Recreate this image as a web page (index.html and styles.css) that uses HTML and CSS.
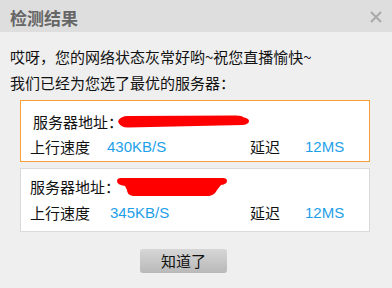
FILE: index.html
```html
<!DOCTYPE html>
<html lang="zh-CN">
<head>
<meta charset="utf-8">
<title>检测结果</title>
<link rel="stylesheet" href="styles.css">
</head>
<body>
<div class="dialog">
  <div class="titlebar">
    <span class="title">检测结果</span>
    <svg class="close" width="12" height="12" viewBox="0 0 12 12"><path d="M1 1L11 11M11 1L1 11" stroke="#a9a9a9" stroke-width="2"/></svg>
  </div>
  <div class="content">
    <p class="msg">哎呀，您的网络状态灰常好哟~祝您直播愉快~</p>
    <p class="msg">我们已经为您选了最优的服务器：</p>
    <div class="card card-selected">
      <div class="row addr addr-indent"><span>服务器地址：</span><svg class="redact" width="131" height="13" viewBox="0 0 131 13"><path d="M0 6.5Q2 1 10 1L118 0.5Q124 0.5 126 2.5Q131 3.5 131 6Q131 9 125 10L10 12.5Q2 12.5 0 6.5Z" fill="#ff0000"/></svg></div>
      <div class="row stats"><span class="label">上行速度</span><span class="val">430KB/S</span><span class="label">延迟</span><span class="val">12MS</span></div>
    </div>
    <div class="card card-plain">
      <div class="row addr"><span>服务器地址：</span><svg class="redact redact-b" width="110" height="18" viewBox="0 0 110 18"><path d="M0 3Q0 0 4 0L106 0Q110 0 110 3Q110 6 104 7L100 12Q98 17 92 18L16 18Q10 17 10 12L8 8Q0 7 0 3Z" fill="#ff0000"/></svg></div>
      <div class="row stats"><span class="label">上行速度</span><span class="val val-b">345KB/S</span><span class="label">延迟</span><span class="val">12MS</span></div>
    </div>
    <div class="actions"><button class="btn">知道了</button></div>
  </div>
</div>
</body>
</html>
```
FILE: styles.css
```css
html, body {
  margin: 0;
  padding: 0;
  background: #efefef;
}
body {
  font-family: "Noto Sans CJK SC", "Liberation Sans", sans-serif;
  color: #111;
  width: 392px;
  height: 288px;
  overflow: hidden;
}
.titlebar {
  height: 32px;
  background: #dedede;
  display: flex;
  align-items: center;
  justify-content: space-between;
  padding: 0 10px 0 10px;
  box-sizing: border-box;
}
.title {
  font-size: 17px;
  font-weight: bold;
  color: #666;
  padding-top: 3px;
}
.close {
  margin-top: 1px;
}
.content {
  padding: 12px 22px 0 10px;
}
.msg {
  margin: 0;
  font-size: 15px;
  line-height: 26px;
}
.card {
  margin: 4px 0 0 10px;
  background: #fff;
  font-size: 15px;
}
.card-selected {
  border: 1px solid #f6a035;
  padding: 8px 0 2px 9px;
}
.card-plain {
  margin-top: 6px;
  border: 1px solid #dadada;
  padding: 5px 0 6px 9px;
}
.row {
  height: 25px;
  display: flex;
  align-items: center;
}
.card-plain .stats {
  margin-top: 1px;
}
.addr-indent {
  padding-left: 3px;
}
.redact {
  display: block;
  margin-left: -5px;
}
.redact-b {
  margin-left: -3px;
}
.stats {
  display: grid;
  grid-template-columns: 77px 143px 55px auto;
  align-items: center;
}
.val {
  font-family: "Liberation Sans", sans-serif;
  color: #1e9fe9;
  font-size: 15px;
}
.val-b {
  padding-left: 3px;
}
.actions {
  display: flex;
  padding: 17px 0 0 130px;
}
.btn {
  width: 87px;
  height: 24px;
  border: none;
  border-radius: 3px;
  background: linear-gradient(#d6d6d6, #b9b9b9);
  font-family: "Noto Sans CJK SC", sans-serif;
  font-size: 15px;
  color: #111;
  padding: 0;
  line-height: 24px;
}
```
